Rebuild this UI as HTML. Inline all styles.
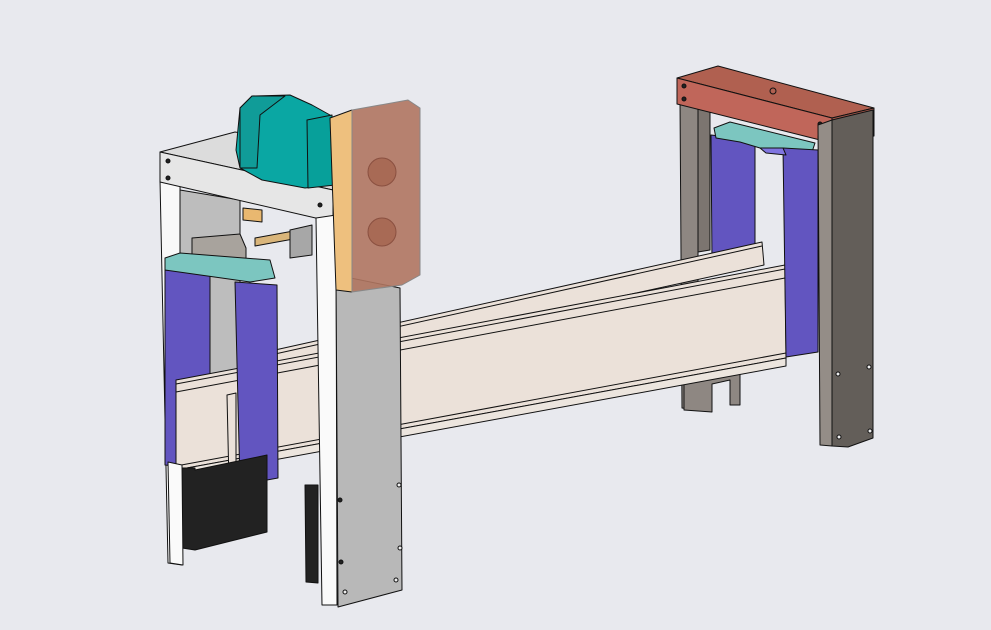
<!DOCTYPE html>
<html><head><style>
html,body{margin:0;padding:0;background:#e8e9ee;}
svg{display:block}
</style></head><body>
<svg width="991" height="630" viewBox="0 0 991 630" xmlns="http://www.w3.org/2000/svg" stroke="#111" stroke-width="1" stroke-linejoin="round">
<rect x="0" y="0" width="991" height="630" fill="#e8e9ee" stroke="none"/>
<!-- right back leg -->
<polygon points="680,100 698,104 698,410 682,408" fill="#8e8782"/>
<polygon points="698,104 710,106 710,250 698,252" fill="#7c7570"/>
<polygon points="684,365 740,360 740,405 730,405 730,380 712,384 712,412 684,410" fill="#8e8782"/>
<polygon points="711,135 755,140 755,255 712,262" fill="#6255c0"/>
<polygon points="714,128 730,122 815,143 812,152 760,148 740,142 716,138" fill="#7cc6c0"/>
<!-- left white back leg -->
<polygon points="160,180 180,182 182,565 168,563" fill="#f8f8f8"/>
<polygon points="180,190 240,200 240,370 180,380" fill="#bdbdbd"/>
<!-- left purple back plate (behind beam) -->
<polygon points="165,270 210,274 210,470 165,465" fill="#6255c0"/>
<!-- beam back rail -->
<polygon points="275,350 762,242 764,265 275,372" fill="#ebe1d9"/>
<line x1="275" y1="354" x2="762" y2="246"/>
<!-- beam front face -->
<polygon points="176,380 785,265 786,358 176,470" fill="#ebe1d9"/>
<line x1="176" y1="384" x2="785" y2="269"/>
<line x1="176" y1="392" x2="785" y2="278"/>
<line x1="176" y1="466" x2="786" y2="353"/>
<polygon points="176,470 786,358 786,366 176,478" fill="#ece5de"/>
<!-- right front purple plate -->
<polygon points="783,148 818,150 818,352 786,357" fill="#6255c0"/>
<polygon points="760,148 783,148 786,155 766,153" fill="#8075e0"/>
<!-- red top bar -->
<polygon points="677,78 718,66 874,108 832,118" fill="#b06050"/>
<polygon points="677,78 832,118 832,143 677,104" fill="#c0665a"/>
<polygon points="832,118 874,108 874,136 832,143" fill="#a85a4d"/>
<circle cx="684" cy="86" r="2" fill="#222"/><circle cx="684" cy="99" r="2" fill="#222"/>
<circle cx="820" cy="124" r="2" fill="#222"/><circle cx="820" cy="137" r="2" fill="#222"/>
<circle cx="773" cy="91" r="3" fill="none"/>
<!-- right front leg -->
<polygon points="818,125 832,120 832,446 820,445" fill="#948d87"/>
<polygon points="832,120 873,110 873,438 848,447 832,446" fill="#635e59"/>
<circle cx="838" cy="374" r="2" fill="#eee"/><circle cx="869" cy="367" r="2" fill="#eee"/>
<circle cx="839" cy="437" r="2" fill="#eee"/><circle cx="870" cy="431" r="2" fill="#eee"/>
<!-- top plate left -->
<polygon points="160,152 235,132 345,150 333,190" fill="#dcdcdc"/>
<polygon points="160,152 333,190 333,222 160,182" fill="#e6e6e6"/>
<circle cx="168" cy="161" r="2" fill="#222"/><circle cx="168" cy="178" r="2" fill="#222"/>
<circle cx="320" cy="205" r="2" fill="#222"/><circle cx="320" cy="222" r="2" fill="#222"/>
<!-- motor -->
<polygon points="240,108 252,96 290,95 312,105 330,115 332,185 305,188 262,180 240,168 236,150" fill="#0aa7a3"/>
<polygon points="240,108 252,96 285,96 260,115 257,168 240,168" fill="#109c98"/>
<polygon points="307,120 332,115 335,185 308,188" fill="#07a09a"/>
<!-- shaft & blocks -->
<polygon points="243,208 262,210 262,222 243,220" fill="#e9b870"/>
<polygon points="255,238 310,228 310,236 255,246" fill="#d9b57a"/>
<polygon points="290,230 312,225 312,255 290,258" fill="#a7a7a7"/>
<polygon points="192,238 240,234 246,248 246,270 200,270 192,262" fill="#a8a39d"/>
<polygon points="165,258 180,253 270,260 275,278 250,282 165,270" fill="#7cc6c0"/>
<!-- left front purple -->
<polygon points="235,282 277,285 278,478 240,485" fill="#6255c0"/>
<polygon points="227,395 236,393 236,483 229,484" fill="#ebe1d9"/>
<!-- black boxes -->
<polygon points="182,468 195,468 195,470 267,455 267,532 195,550 182,548" fill="#222"/>
<polygon points="305,485 318,485 318,583 306,582" fill="#222"/>
<polygon points="168,462 182,465 183,565 170,563" fill="#fafafa"/>
<!-- right inner white leg -->
<polygon points="316,218 336,215 337,605 322,605" fill="#fafafa"/>
<!-- gray column -->
<polygon points="336,275 400,288 402,590 338,607" fill="#b8b8b8"/>
<circle cx="340" cy="500" r="2" fill="#222"/><circle cx="341" cy="562" r="2" fill="#222"/>
<circle cx="399" cy="485" r="2" fill="#eee"/><circle cx="400" cy="548" r="2" fill="#eee"/>
<circle cx="396" cy="580" r="2" fill="#eee"/><circle cx="345" cy="592" r="2" fill="#eee"/>
<!-- gearbox -->
<polygon points="330,118 352,110 352,292 336,290" fill="#eec07e"/>
<polygon points="352,110 408,100 420,108 420,275 402,285 352,292" fill="#b07560" fill-opacity="0.9" stroke="#888"/>
<circle cx="382" cy="172" r="14" fill="#a86a55" stroke="#8a5040"/>
<circle cx="382" cy="232" r="14" fill="#a86a55" stroke="#8a5040"/>
</svg>
</body></html>
